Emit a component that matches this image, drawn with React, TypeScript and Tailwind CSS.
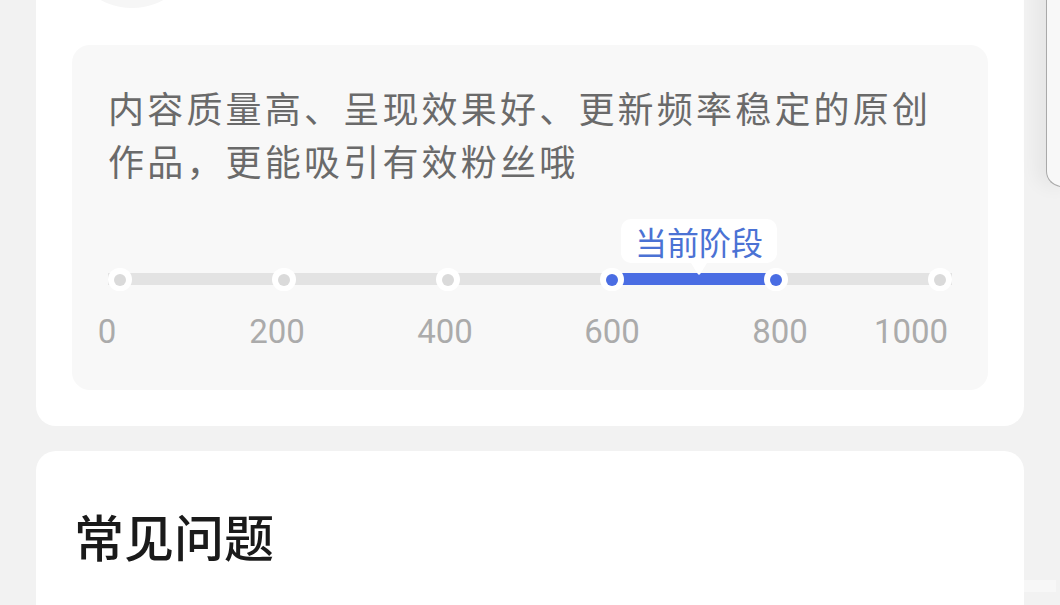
import React from "react";

const ticks = [
  { label: "0", left: "left-[-1px]" },
  { label: "200", left: "left-[169px]" },
  { label: "400", left: "left-[337px]" },
  { label: "600", left: "left-[504px]" },
  { label: "800", left: "left-[672px]" },
  { label: "1000", left: "left-[803px]" },
];

function Dot({ active }: { active?: boolean }) {
  return (
    <div className="w-[24px] h-[23px] rounded-full bg-white flex items-center justify-center">
      <div
        className={
          active
            ? "w-[12px] h-[12px] rounded-full bg-[#4a6de3]"
            : "w-[12px] h-[12px] rounded-full bg-[#dadada]"
        }
      />
    </div>
  );
}

export default function App() {
  return (
    <div
      className="relative w-[1060px] h-[605px] overflow-hidden bg-[#f2f2f2]"
      style={{ fontFamily: '"Noto Sans CJK SC", "Noto Sans", sans-serif' }}
    >
      <div className="px-[36px] flex flex-col gap-[25px]">
        {/* Card 1 */}
        <div className="mt-[-140px] bg-white rounded-b-[20px] px-[36px] pt-[16px] pb-[36px] flex flex-col">
          <div className="w-[132px] h-[132px] rounded-full bg-[#f6f6f6] ml-[-6px]" />
          <div className="mt-[37px] bg-[#f8f8f8] rounded-[18px] pl-[36px] pr-[36px] pt-[36px] pb-[42px]">
            <p className="text-[36px] leading-[53px] tracking-[3.2px] text-[#6a6a6a]">
              内容质量高、呈现效果好、更新频率稳定的原创作品，更能吸引有效粉丝哦
            </p>

            {/* Slider */}
            <div className="mt-[32px] flex flex-col">
              <div className="relative h-[44px]">
                <div className="absolute left-[513px] top-0 w-[156px] h-[44px] rounded-[10px] bg-white flex items-center justify-center">
                  <span className="text-[32px] leading-none text-[#4b72d4]">当前阶段</span>
                </div>
              </div>
              <div className="relative h-[23px] mt-[5px]">
                <div className="absolute left-0 right-0 top-[5px] h-[12px] bg-[#e3e3e3]" />
                <div className="absolute left-[504px] w-[164px] top-[5px] h-[12px] bg-[#4a6de3]" />
                <svg
                  className="absolute left-[583px] top-[-5px]"
                  width="16"
                  height="14"
                  viewBox="0 0 16 14"
                >
                  <path d="M0 0 H16 L9.2 11 Q8 12.6 6.8 11 Z" fill="#ffffff" />
                </svg>
                <div className="relative flex items-center justify-between h-[23px]">
                  <Dot />
                  <Dot />
                  <Dot />
                  <Dot active />
                  <Dot active />
                  <Dot />
                </div>
              </div>
              <div
                className="relative h-[33px] mt-[24px]"
                style={{ fontFamily: 'Roboto, "Noto Sans", sans-serif' }}
              >
                {ticks.map((t) => (
                  <span
                    key={t.label}
                    className={`absolute top-0 ${t.left} -translate-x-1/2 text-[33px] leading-[33px] text-[#ababab]`}
                  >
                    {t.label}
                  </span>
                ))}
              </div>
            </div>
          </div>
        </div>

        {/* Card 2 */}
        <div className="bg-white rounded-t-[20px] px-[38px] pt-[54px] h-[300px]">
          <h2 className="text-[50px] leading-[60px] font-medium text-[#1a1a1a]">常见问题</h2>
        </div>
      </div>

      {/* floating side edge */}
      <div className="absolute left-[1046px] top-[-20px] w-[30px] h-[207px] border-l-[1.5px] border-b-[1.5px] border-[#a9a9a9] rounded-bl-[16px] bg-[#f8f8f8] shadow-[-10px_0_18px_rgba(0,0,0,0.05)]" />
      <div className="absolute left-[1022px] top-[580px] w-[34px] h-[12px] bg-white/40" />
    </div>
  );
}
